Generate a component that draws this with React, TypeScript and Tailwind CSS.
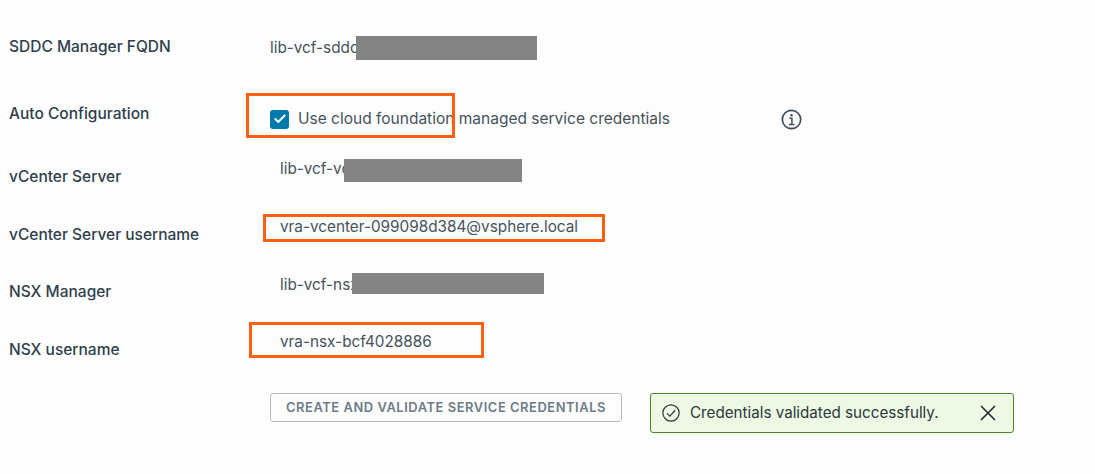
import React from "react";
import { Check } from "lucide-react";

const labelClass = "flex items-center h-[24px] text-[15.5px] font-medium text-[#2f3f4c]";
const valueClass = "flex items-center h-[24px] text-[15.3px] text-[#46525c]";

const labels = [
  { text: "SDDC Manager FQDN", top: "mt-[35px]" },
  { text: "Auto Configuration", top: "mt-[43px]" },
  { text: "vCenter Server", top: "mt-[39px]" },
  { text: "vCenter Server username", top: "mt-[34px]" },
  { text: "NSX Manager", top: "mt-[33px]" },
  { text: "NSX username", top: "mt-[34px]" },
];

// grey redaction blocks and orange callouts lie over the form
const Redact = ({ className }: { className: string }) => (
  <div className={`absolute bg-[#848487] ${className}`} />
);

const Callout = ({ className }: { className: string }) => (
  <div className={`absolute border-[3px] border-[#fc5f0f] ${className}`} />
);

const InfoIcon = () => (
  <svg width="21" height="21" viewBox="0 0 21 21" fill="none" stroke="#3c4e5c">
    <circle cx="10.5" cy="10.5" r="9.2" strokeWidth="1.7" />
    <circle cx="10.5" cy="6.3" r="1.2" fill="#3c4e5c" stroke="none" />
    <path d="M8.4 9.2h2.5v6M8 15.4h5.4" strokeWidth="1.5" />
  </svg>
);

const CheckCircle = () => (
  <svg width="18" height="18" viewBox="0 0 17 17" fill="none" stroke="#26343f" strokeWidth="1.1">
    <circle cx="8.5" cy="8.5" r="7.7" />
    <path d="M4.8 8.8l2.6 2.7 5-5.6" />
  </svg>
);

const CloseIcon = () => (
  <svg width="16" height="16" viewBox="0 0 16 16" fill="none" stroke="#1f2b34" strokeWidth="1.6">
    <path d="M1 1l14 14M15 1L1 15" />
  </svg>
);

const App: React.FC = () => {
  return (
    <div className="relative flex w-[1095px] h-[474px] overflow-hidden bg-[#fdfdfd] font-['Inter',sans-serif]">
      <div className="w-[270px] shrink-0 pl-[9px]">
        {labels.map((l) => (
          <div key={l.text} className={`${labelClass} ${l.top}`}>{l.text}</div>
        ))}
      </div>

      <div className="flex-1">
        <div className={`${valueClass} mt-[36px]`}>lib-vcf-sddc</div>
        <div className={`${valueClass} mt-[47px] gap-[9px]`}>
          <span className="flex h-[19px] w-[19px] items-center justify-center rounded-[3px] bg-[#0079ad]">
            <Check size={14} strokeWidth={3.5} color="#ffffff" />
          </span>
          <span className="text-[15.5px]">Use cloud foundation managed service credentials</span>
          <span className="ml-[102px]"><InfoIcon /></span>
        </div>
        <div className={`${valueClass} mt-[26px] pl-[10px]`}>lib-vcf-vc</div>
        <div className={`${valueClass} mt-[34px] pl-[10px]`}>vra-vcenter-099098d384@vsphere.local</div>
        <div className={`${valueClass} mt-[34px] pl-[10px]`}>lib-vcf-nsx</div>
        <div className={`${valueClass} mt-[33px] pl-[10px]`}>vra-nsx-bcf4028886</div>

        <div className="mt-[39px] flex items-start gap-[28px]">
          <button className="flex h-[29px] w-[352px] items-center justify-center rounded-[3px] border border-[#b5bdc3] text-[12.9px] font-semibold tracking-[0.56px] text-[#6c7b87]">
            CREATE AND VALIDATE SERVICE CREDENTIALS
          </button>
          <div className="flex h-[40px] w-[364px] items-center rounded-[3px] border border-[#4f8a1c] bg-[#eef9e3] pl-[11px] pr-[17px] text-[15.2px] text-[#2a3640]">
            <CheckCircle />
            <span className="ml-[10px] flex-1">Credentials validated successfully.</span>
            <CloseIcon />
          </div>
        </div>
      </div>

      <Redact className="left-[356px] top-[36px] w-[181px] h-[24px]" />
      <Redact className="left-[344px] top-[159px] w-[178px] h-[23px]" />
      <Redact className="left-[352px] top-[273px] w-[192px] h-[21px]" />

      <Callout className="left-[246px] top-[93px] w-[209px] h-[45px]" />
      <Callout className="left-[263px] top-[214px] w-[342px] h-[28px]" />
      <Callout className="left-[249px] top-[322px] w-[235px] h-[36px]" />
    </div>
  );
};

export default App;
